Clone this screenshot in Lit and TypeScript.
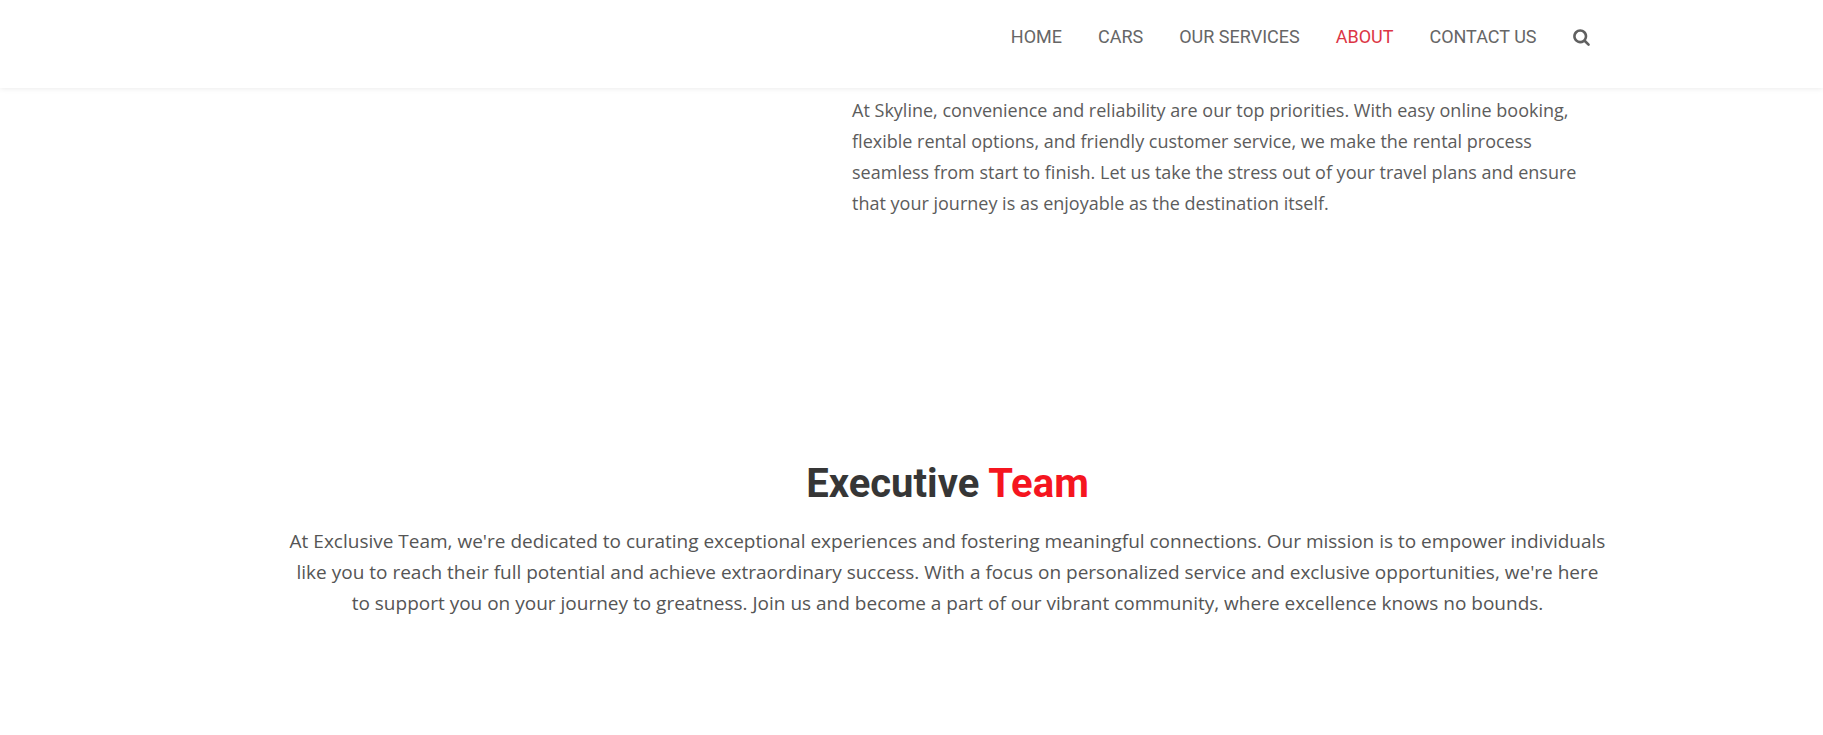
import { LitElement, html, css } from "lit";
import { customElement } from "lit/decorators.js";

interface NavItem {
  label: string;
  href: string;
  active?: boolean;
}

const NAV: NavItem[] = [
  { label: "Home", href: "#home" },
  { label: "Cars", href: "#cars" },
  { label: "Our Services", href: "#services" },
  { label: "About", href: "#about", active: true },
  { label: "Contact Us", href: "#contact" },
];

@customElement("site-header")
export class SiteHeader extends LitElement {
  static styles = css`
    :host {
      display: block;
      background: #fff;
      box-shadow: 0 0 6px rgba(0, 0, 0, 0.1);
    }
    .bar {
      box-sizing: border-box;
      max-width: 1356px;
      min-height: 88px;
      margin: 0 auto;
      padding-top: 21px;
      display: flex;
      justify-content: flex-end;
      align-items: flex-start;
      gap: 36px;
      font: 400 18px/32px Roboto, sans-serif;
      text-transform: uppercase;
    }
    .links {
      display: flex;
      flex-wrap: wrap;
      gap: 36px;
      margin: 0;
      padding: 0;
      list-style: none;
    }
    .link {
      color: #666;
      text-decoration: none;
    }
    .link.active {
      color: #dc3545;
    }
    .search {
      display: flex;
      align-items: center;
      height: 32px;
      padding: 0;
      border: 0;
      background: none;
      color: #606060;
      cursor: pointer;
    }
    .icon {
      display: block;
      width: 17px;
      height: 18px;
      fill: currentColor;
    }
  `;

  render() {
    return html`
      <header class="bar">
        <nav aria-label="Main">
          <ul class="links">
            ${NAV.map(
              (item) => html`<li>
                <a class="link ${item.active ? "active" : ""}" href=${item.href}>${item.label}</a>
              </li>`
            )}
          </ul>
        </nav>
        <button class="search" type="button" aria-label="Search">
          <svg class="icon" viewBox="0 0 1664 1792" aria-hidden="true">
            <path
              d="M1152 832q0-185-131.500-316.500t-316.500-131.500-316.500 131.500-131.500 316.500 131.500 316.500 316.500 131.500 316.500-131.500 131.500-316.500zm512 832q0 52-38 90t-90 38q-54 0-90-38l-343-342q-179 124-399 124-143 0-273.500-55.500t-225-150-150-225-55.500-273.500 55.500-273.500 150-225 225-150 273.500-55.500 273.500 55.500 225 150 150 225 55.500 273.500q0 220-124 399l343 343q37 37 37 90z"
            />
          </svg>
        </button>
      </header>
    `;
  }
}

@customElement("app-root")
export class AppRoot extends LitElement {
  static styles = css`
    :host {
      display: block;
      min-height: 100vh;
      background: #fff;
      color: #555;
      font-family: "Open Sans", sans-serif;
      line-height: 31px;
    }
    .about {
      max-width: 1356px;
      margin: 0 auto;
      padding-top: 7px;
      display: grid;
      grid-template-columns: 5fr 6fr;
      column-gap: 4px;
    }
    .copy {
      grid-column: 2;
      margin: 0;
      color: #5c5c5c;
      font-size: 18px;
    }
    .team {
      max-width: 1320px;
      margin: 0 auto;
      padding: 241px 0 104px 72px;
      text-align: center;
    }
    .title {
      margin: 0;
      color: #363636;
      font: 700 40px/48px Roboto, sans-serif;
    }
    .accent {
      color: #f5151f;
    }
    .lead {
      margin: 18px 0 0;
      font-size: 19px;
    }
  `;

  render() {
    return html`
      <site-header></site-header>
      <main>
        <section class="about">
          <p class="copy">
            At Skyline, convenience and reliability are our top priorities. With easy online
            booking, flexible rental options, and friendly customer service, we make the rental
            process seamless from start to finish. Let us take the stress out of your travel plans
            and ensure that your journey is as enjoyable as the destination itself.
          </p>
        </section>
        <section class="team">
          <h2 class="title">Executive <span class="accent">Team</span></h2>
          <p class="lead">
            At Exclusive Team, we're dedicated to curating exceptional experiences and fostering
            meaningful connections. Our mission is to empower individuals like you to reach their
            full potential and achieve extraordinary success. With a focus on personalized service
            and exclusive opportunities, we're here to support you on your journey to greatness.
            Join us and become a part of our vibrant community, where excellence knows no bounds.
          </p>
        </section>
      </main>
    `;
  }
}
